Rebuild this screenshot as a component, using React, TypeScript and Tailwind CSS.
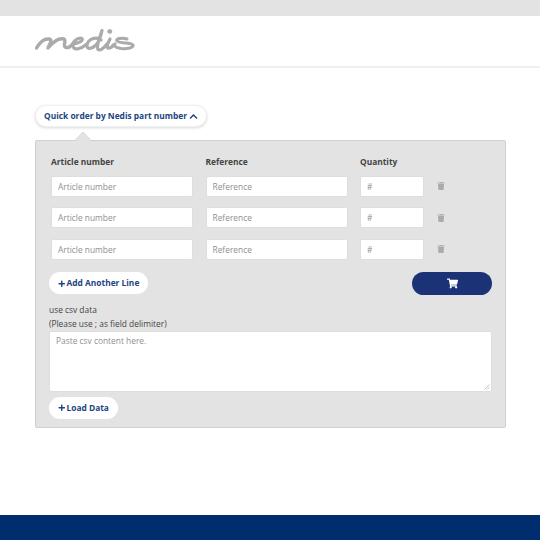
import { FaChevronUp, FaPlus, FaShoppingCart, FaTrash } from "react-icons/fa";

function Logo() {
  return (
    <svg width="100" height="24" viewBox="0 0 100 24" fill="none" stroke="#ababab" strokeLinecap="round" strokeLinejoin="round">
      <path d="M1.5 19 C5 13 10 9.5 14 10 C18 11 14.5 15 13 19 C18 13 24 8.5 29 10 C32 11.5 27 17 31 18.5 C33 19 35 18 37 16" strokeWidth="3.4" />
      <path d="M37 15 C42 15 49 12 47 9.5 C44 8 37 12 38 17 C39 22 46 20 52 15" strokeWidth="3.2" />
      <path d="M66 11 C61 7 53 10 52 16 C51.5 21 57 20 61 16 C65 11.5 66 6 67 1.5 C65 8 61 17 63 20.5 C65 22 69 19 72 15" strokeWidth="3.2" />
      <path d="M75 10 C73 14 71 18 73 19 C75 20 78 17 80 15" strokeWidth="3.2" />
      <path d="M74.5 2.5 L75 2.5" strokeWidth="4.4" />
      <path d="M92 10 C87 8 80 10 82 12 C85 15 96 13 98 16 C99 19.5 90 20 86 19.5 C82 19 80 18 78 16" strokeWidth="3" />
    </svg>
  );
}

const inputClass =
  "h-[21px] w-full min-w-0 rounded-[2px] bg-white px-[6px] text-[8.4px] text-[#555] outline-none border border-[#dedede] placeholder:text-[#8f8f8f]";

function Row() {
  return (
    <>
      <input className={inputClass} placeholder="Article number" />
      <input className={inputClass} placeholder="Reference" />
      <input className={inputClass} placeholder="#" />
      <div className="flex h-[21px] items-center">
        <FaTrash size={8} className="text-[#ababab]" />
      </div>
    </>
  );
}

function PillButton({ label }: { label: string }) {
  return (
    <button className="flex h-[22px] items-center gap-[1px] rounded-full bg-white px-[9px] text-[8.4px] font-bold text-[#1c4483]">
      <FaPlus size={7.5} />
      {label}
    </button>
  );
}

export default function App() {
  return (
    <div className="flex h-[540px] w-[540px] flex-col overflow-hidden bg-white font-['Open_Sans',sans-serif]">
      <div className="h-4 shrink-0 bg-[#e3e3e3]" />
      <header className="flex h-[52px] shrink-0 items-center border-b-2 border-[#f0f0f0] pl-[35px]">
        <Logo />
      </header>
      <main className="flex-1 pl-[35px] pt-[37px]">
        <button className="flex h-[22px] items-center gap-[2px] rounded-full border border-[#f0f0f0] bg-white pl-[8px] pr-[8px] text-[8.4px] font-bold text-[#1c4483] shadow-[0_1px_3px_rgba(0,0,0,0.15)]">
          Quick order by Nedis part number
          <FaChevronUp size={9} />
        </button>
        <div className="relative mt-[13px] w-[471px] rounded-[2px] border border-[#cfcfcf] bg-[#e3e3e3] px-[13px] pt-[15px]">
          <div className="absolute -top-[7px] left-[41px] h-3 w-3 rotate-45 rounded-[1px] border-l border-t border-[#cfcfcf] bg-[#e3e3e3]" />
          <div className="relative grid grid-cols-[142px_142px_64px_auto] gap-x-[12.5px] gap-y-[10.4px] pl-[2px]">
            <div className="h-[9.5px] text-[8.4px] font-bold leading-[12px] text-[#444]">Article number</div>
            <div className="h-[9.5px] text-[8.4px] font-bold leading-[12px] text-[#444]">Reference</div>
            <div className="h-[9.5px] text-[8.4px] font-bold leading-[12px] text-[#444]">Quantity</div>
            <div />
            <Row />
            <Row />
            <Row />
          </div>
          <div className="mt-[12.3px] flex items-center justify-between">
            <PillButton label="Add Another Line" />
            <button className="flex h-[23px] w-[80px] items-center justify-center rounded-full bg-[#1b3277] text-white">
              <FaShoppingCart size={11} />
            </button>
          </div>
          <p className="mt-[8px] text-[8.4px] leading-[14px] text-[#444]">use csv data</p>
          <p className="text-[8.4px] leading-[14px] text-[#444]">(Please use ; as field delimiter)</p>
          <div className="relative h-[61px] w-[443px]">
            <textarea
              className="block h-full w-full resize-none rounded-[2px] border border-[#dedede] bg-white px-[6px] py-[3px] text-[8.4px] outline-none placeholder:text-[#8f8f8f]"
              placeholder="Paste csv content here."
            />
            <svg className="absolute bottom-[2px] right-[2px]" width="6" height="6" viewBox="0 0 6 6" stroke="#b5b5b5" strokeWidth="0.8">
              <path d="M0.5 5.5 L5.5 0.5 M3 5.5 L5.5 3" />
            </svg>
          </div>
          <div className="mb-[8px] mt-[5px]">
            <PillButton label="Load Data" />
          </div>
        </div>
      </main>
      <footer className="h-[25px] shrink-0 bg-[#002d6e]" />
    </div>
  );
}
